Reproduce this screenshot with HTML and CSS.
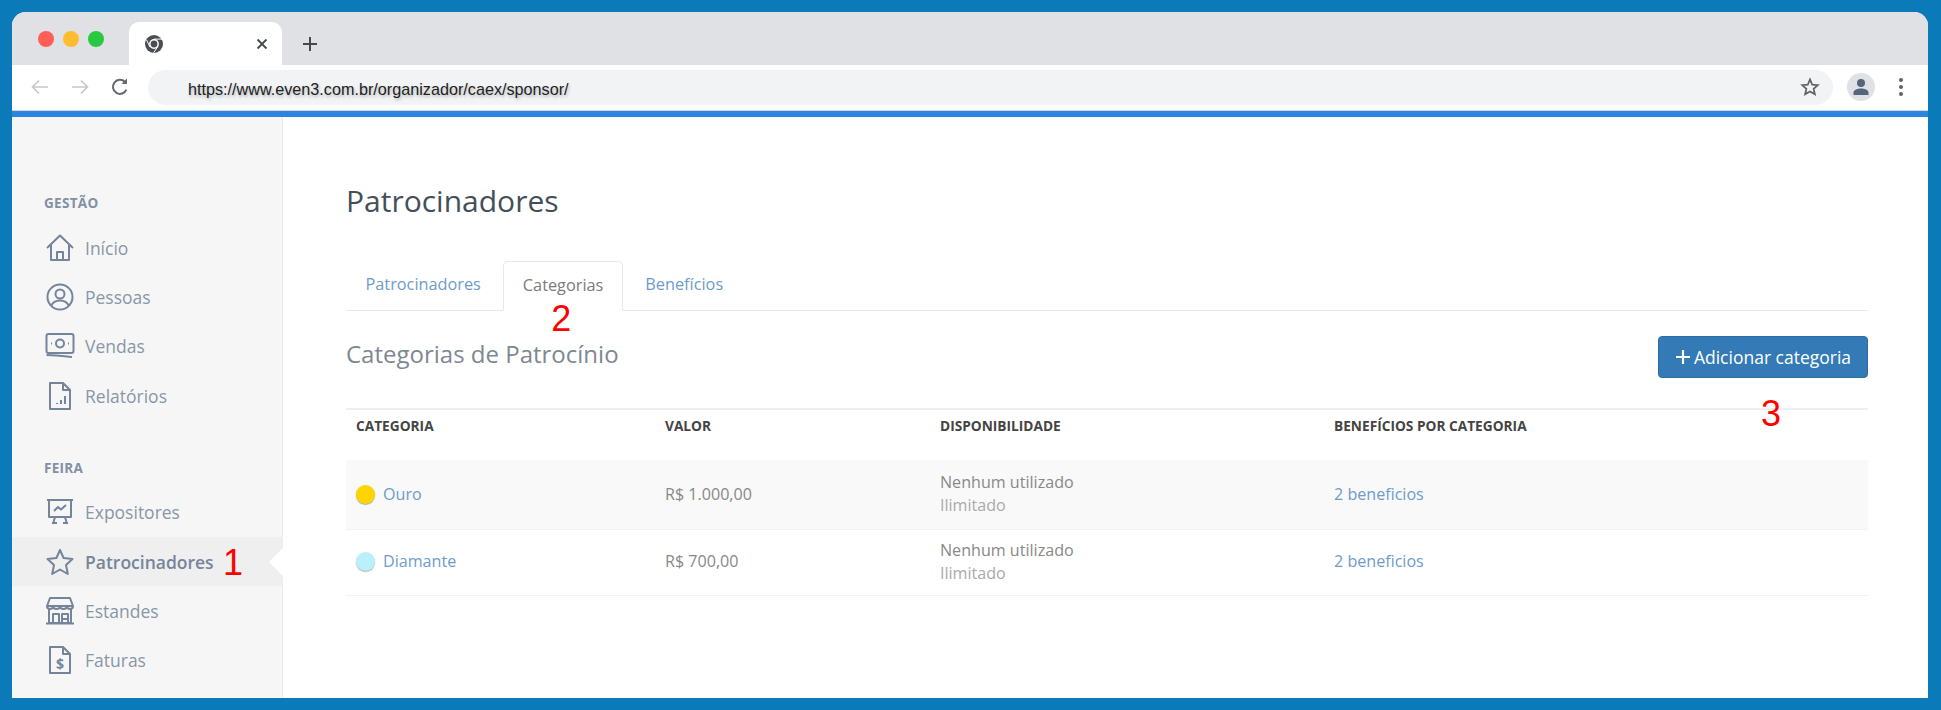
FILE: index.html
```html
<!DOCTYPE html>
<html lang="en">
<head>
    <meta charset="UTF-8">
    <meta name="viewport" content="width=device-width, initial-scale=1.0">
    <title>Patrocinadores</title>
    <link rel="stylesheet" href="styles.css">
</head>
<body>
    <div class="window">
        <div class="tabstrip">
            <div class="lights">
                <span class="light red"></span>
                <span class="light yellow"></span>
                <span class="light green"></span>
            </div>
            <div class="browser-tab">
                <svg class="chrome-logo" width="18" height="18" viewBox="0 0 18 18">
                    <circle cx="9" cy="9" r="9" fill="#4a4d52"/>
                    <circle cx="9" cy="9" r="4.9" fill="#fff"/>
                    <circle cx="9" cy="9" r="3.4" fill="#4a4d52"/>
                    <path d="M9 4.1H17M5 12L1.6 5M12.8 11.6L8.6 17.8" stroke="#fff" stroke-width="1"/>
                </svg>
                <svg width="12" height="12" viewBox="0 0 12 12">
                    <path d="M1.5 1.5L10.5 10.5M10.5 1.5L1.5 10.5" stroke="#45484d" stroke-width="1.8"/>
                </svg>
            </div>
            <svg class="new-tab" width="16" height="16" viewBox="0 0 16 16">
                <path d="M8 1V15M1 8H15" stroke="#45484d" stroke-width="2"/>
            </svg>
        </div>

        <div class="toolbar">
            <svg width="20" height="18" viewBox="0 0 20 18" fill="none" stroke="#c4c6c9" stroke-width="1.6">
                <path d="M18 9H3M9 2.5L2.5 9L9 15.5"/>
            </svg>
            <svg class="forward" width="20" height="18" viewBox="0 0 20 18" fill="none" stroke="#c4c6c9" stroke-width="1.6">
                <path d="M2 9H17M11 2.5L17.5 9L11 15.5"/>
            </svg>
            <svg class="reload" width="20" height="20" viewBox="0 0 20 20" fill="none" stroke="#65686c" stroke-width="2">
                <path d="M16.4 12.6A7 7 0 1 1 15 5"/>
                <path d="M17 1.5V7H11.5Z" fill="#65686c" stroke="none"/>
            </svg>
            <div class="omnibox">
                <span class="url">https://www.even3.com.br/organizador/caex/sponsor/</span>
                <svg width="20" height="20" viewBox="0 0 20 20" fill="none" stroke="#5f6368" stroke-width="1.7">
                    <path d="M10 2.4L12.2 7.6L17.8 8.1L13.6 11.8L14.9 17.3L10 14.4L5.1 17.3L6.4 11.8L2.2 8.1L7.8 7.6Z"/>
                </svg>
            </div>
            <div class="avatar">
                <svg width="18" height="18" viewBox="0 0 18 18" fill="#56657c">
                    <circle cx="9" cy="5" r="4"/>
                    <path d="M1.5 17V14.6C1.5 11.8 6 10.6 9 10.6S16.5 11.8 16.5 14.6V17Z"/>
                </svg>
            </div>
            <div class="kebab"><i></i><i></i><i></i></div>
        </div>
        <div class="loadbar"></div>

        <div class="page">
            <nav class="sidebar">
                <p class="nav-title">GESTÃO</p>
                <a class="nav-item">
                    <svg class="nav-icon" viewBox="0 0 30 30"><path d="M2 15L15 2.5L28 15M6 12V27H24V12M12 27V19H18V27"/></svg>
                    Início
                </a>
                <a class="nav-item">
                    <svg class="nav-icon" viewBox="0 0 30 30"><circle cx="15" cy="15" r="12.5"/><circle cx="15" cy="12" r="4.5"/><path d="M6 24C8 19.5 11 18.5 15 18.5S22 19.5 24 24"/></svg>
                    Pessoas
                </a>
                <a class="nav-item">
                    <svg class="nav-icon" viewBox="0 0 30 30"><rect x="1.5" y="3" width="27" height="19" rx="2"/><circle cx="15" cy="12.5" r="4"/><path d="M6 12.5H7M23 12.5H24M1.5 24C10 24 18 25 27 26"/></svg>
                    Vendas
                </a>
                <a class="nav-item">
                    <svg class="nav-icon" viewBox="0 0 30 30"><path d="M5 2H18L25 9V28H5ZM18 2V9H25M12 23V22M16 23V19M20 23V15"/></svg>
                    Relatórios
                </a>

                <p class="nav-title fair">FEIRA</p>
                <a class="nav-item">
                    <svg class="nav-icon" viewBox="0 0 30 30"><path d="M2 3H28M4 3V20H26V3M9 14L13 10L16 12.5L21 8M10 20L8 27M20 20L22 27M7 26H12M18 26H23"/></svg>
                    Expositores
                </a>
                <a class="nav-item active">
                    <svg class="nav-icon" viewBox="0 0 30 30"><path d="M15 3L18.6 11L27.5 12L21 18L22.8 27L15 22.5L7.2 27L9 18L2.5 12L11.4 11Z"/></svg>
                    Patrocinadores
                    <span class="mark mark-one">1</span>
                </a>
                <a class="nav-item">
                    <svg class="nav-icon" viewBox="0 0 30 30"><path d="M5 2H25L28 10H2ZM2 10C2 14 8 14 8 10C8 14 15 14 15 10C15 14 22 14 22 10C22 14 28 14 28 10M4 13V27H26V13M1 27.5H29M8 27V18H14V27M17 27V18H23V27M17 23H23"/></svg>
                    Estandes
                </a>
                <a class="nav-item">
                    <svg class="nav-icon" viewBox="0 0 30 30"><path d="M5 2H18L25 9V28H5ZM18 2V9H25"/><text x="15" y="24" text-anchor="middle" class="dollar">$</text></svg>
                    Faturas
                </a>
            </nav>

            <main class="content">
                <h1>Patrocinadores</h1>

                <ul class="tabs">
                    <li class="tab">Patrocinadores</li>
                    <li class="tab active">Categorias<span class="mark mark-two">2</span></li>
                    <li class="tab">Benefícios</li>
                </ul>

                <div class="section-head">
                    <h2>Categorias de Patrocínio</h2>
                    <button class="btn-add">
                        <svg width="16" height="16" viewBox="0 0 16 16"><path d="M8 1V15M1 8H15" stroke="#fff" stroke-width="2.2"/></svg>
                        Adicionar categoria
                        <span class="mark mark-three">3</span>
                    </button>
                </div>

                <table class="list">
                    <thead>
                        <tr>
                            <th class="col-cat">CATEGORIA</th>
                            <th class="col-val">VALOR</th>
                            <th class="col-disp">DISPONIBILIDADE</th>
                            <th>BENEFÍCIOS POR CATEGORIA</th>
                        </tr>
                    </thead>
                    <tbody>
                        <tr class="row-gold">
                            <td><span class="medal gold"></span><a>Ouro</a></td>
                            <td>R$ 1.000,00</td>
                            <td>Nenhum utilizado<br><span class="muted">Ilimitado</span></td>
                            <td><a>2 beneficios</a></td>
                        </tr>
                        <tr class="row-diamond">
                            <td><span class="medal diamond"></span><a>Diamante</a></td>
                            <td>R$ 700,00</td>
                            <td>Nenhum utilizado<br><span class="muted">Ilimitado</span></td>
                            <td><a>2 beneficios</a></td>
                        </tr>
                    </tbody>
                </table>
            </main>
        </div>
    </div>
</body>
</html>
```

FILE: styles.css
```css
*{
    margin: 0;
    padding: 0;
    box-sizing: border-box;
}
html, body{
    height: 100%;
    overflow: hidden;
}
body{
    background-color: #0b7ab9;
    padding: 12px 13px 12px 12px;
    font-family: 'Open Sans', sans-serif;
}
.window{
    height: 100%;
    display: flex;
    flex-direction: column;
    background-color: #fff;
    border-radius: 14px 14px 0 0;
    overflow: hidden;
}

/* browser chrome */
.tabstrip{
    height: 53px;
    flex: none;
    display: flex;
    align-items: flex-end;
    background-color: #dfe1e5;
}
.lights{
    display: flex;
    gap: 9px;
    align-self: flex-start;
    margin: 19px 0 0 26px;
    width: 91px;
}
.light{
    width: 16px;
    height: 16px;
    border-radius: 50%;
}
.red{ background-color: #ff5f57; }
.yellow{ background-color: #ffbd2e; }
.green{ background-color: #28c940; }
.browser-tab{
    width: 153px;
    height: 43px;
    display: flex;
    align-items: center;
    justify-content: space-between;
    padding: 0 14px 0 16px;
    background-color: #fff;
    border-radius: 10px 10px 0 0;
}
.new-tab{
    margin: 0 0 13px 20px;
}
.toolbar{
    height: 46px;
    flex: none;
    display: flex;
    align-items: center;
    padding: 0 0 1px 18px;
    background-color: #fff;
    border-bottom: 1px solid #d5d7da;
}
.forward{
    margin-left: 20px;
}
.reload{
    margin-left: 20px;
}
.omnibox{
    width: 1685px;
    height: 35px;
    margin-left: 18px;
    display: flex;
    align-items: center;
    justify-content: space-between;
    padding: 0 13px 0 40px;
    background-color: #f1f3f4;
    border-radius: 18px;
}
.url{
    margin-top: 4px;
    font-family: 'Liberation Sans', sans-serif;
    font-size: 16.2px;
    color: #222;
    text-shadow: 1px 2px 3px rgba(0, 0, 0, 0.25);
}
.avatar{
    width: 28px;
    height: 28px;
    margin-left: 14px;
    display: flex;
    align-items: center;
    justify-content: center;
    background-color: #dfe1e5;
    border-radius: 50%;
}
.kebab{
    display: flex;
    flex-direction: column;
    gap: 3px;
    margin-left: 24px;
}
.kebab i{
    display: block;
    width: 4px;
    height: 4px;
    background-color: #5f6368;
    border-radius: 50%;
}
.loadbar{
    height: 6px;
    flex: none;
    background-color: #2a86de;
}

/* page */
.page{
    flex: 1;
    display: flex;
    min-height: 0;
}
.sidebar{
    width: 271px;
    flex: none;
    padding-top: 76px;
    background-color: #f6f6f6;
    border-right: 1px solid #e9eef0;
}
.nav-title{
    margin: 0 0 10px 32px;
    font-size: 13.5px;
    line-height: 20px;
    font-weight: 700;
    letter-spacing: 0.3px;
    color: #8290a5;
}
.nav-title.fair{
    margin-top: 37px;
}
.nav-item{
    position: relative;
    height: 49.4px;
    display: flex;
    align-items: center;
    gap: 10px;
    padding-left: 33px;
    font-size: 17.5px;
    color: #8896a8;
}
.nav-icon{
    width: 30px;
    height: 30px;
    flex: none;
    fill: none;
    stroke: #74849a;
    stroke-width: 2;
    stroke-linejoin: round;
}
.dollar{
    font-family: 'Open Sans', sans-serif;
    font-size: 14px;
    font-weight: 700;
    fill: #74849a;
    stroke: none;
}
.nav-item.active{
    background-color: #efefef;
    font-weight: 600;
    color: #76859a;
}
.nav-item.active::after{
    content: "";
    position: absolute;
    right: -1px;
    top: 11px;
    border-top: 14px solid transparent;
    border-bottom: 14px solid transparent;
    border-right: 14px solid #fff;
}

/* red notes written over the screenshot */
.mark{
    position: absolute;
    font-family: 'Liberation Sans', sans-serif;
    font-size: 36px;
    line-height: 36px;
    font-weight: 400;
    color: #f00;
}
.mark-one{
    left: 211px;
    top: 8px;
}
.mark-two{
    left: 47px;
    top: 39px;
}
.mark-three{
    left: 102px;
    top: 59px;
}

.content{
    flex: 1;
    padding: 64px 60px 0 63px;
}
h1{
    font-size: 30px;
    line-height: 40px;
    font-weight: 400;
    color: #444f5a;
}
.tabs{
    display: flex;
    gap: 3px;
    height: 50px;
    margin-top: 40px;
    list-style: none;
    border-bottom: 1px solid #e8e8e8;
}
.tab{
    position: relative;
    height: 50px;
    padding: 0 19.5px;
    font-size: 16.3px;
    line-height: 47px;
    color: #6d9ccb;
}
.tab.active{
    color: #7b7b7b;
    background-color: #fff;
    border: 1px solid #e8e8e8;
    border-bottom-color: #fff;
    border-radius: 5px 5px 0 0;
    padding: 0 18.5px;
}
.section-head{
    display: flex;
    justify-content: space-between;
    align-items: flex-start;
    margin-top: 25px;
}
h2{
    margin-top: 1px;
    font-size: 24px;
    line-height: 34px;
    font-weight: 400;
    color: #7d8892;
}
.btn-add{
    position: relative;
    width: 210px;
    height: 42px;
    display: flex;
    align-items: center;
    justify-content: center;
    gap: 3px;
    font-family: 'Open Sans', sans-serif;
    font-size: 17.5px;
    color: #fff;
    background-color: #337ab7;
    border: 1px solid #2e6da4;
    border-radius: 4px;
}
.list{
    width: 100%;
    margin-top: 30px;
    table-layout: fixed;
    border-collapse: collapse;
    font-size: 16.1px;
    color: #888;
}
.list th{
    height: 51px;
    padding: 7px 0 0 10px;
    vertical-align: top;
    text-align: left;
    font-size: 13.7px;
    line-height: 18px;
    font-weight: 700;
    color: #444;
    border-top: 2px solid #eeeef4;
}
.col-cat{ width: 309px; }
.col-val{ width: 275px; }
.col-disp{ width: 394px; }
.list td{
    padding-left: 10px;
    line-height: 23.4px;
    vertical-align: middle;
    border-bottom: 1px solid #f2f2f2;
}
.row-gold{
    height: 69px;
    background-color: #f9f9f9;
}
.row-diamond{
    height: 66px;
}
.list a{
    color: #6d9ccb;
}
.muted{
    color: #a9a9a9;
}
.medal{
    display: inline-block;
    width: 19px;
    height: 19px;
    margin-right: 8px;
    vertical-align: -4px;
    border-radius: 50%;
    box-shadow: 0 1px 1px rgba(0, 0, 0, 0.3);
}
.gold{ background-color: #ffd400; }
.diamond{ background-color: #b9f0fb; }
```
